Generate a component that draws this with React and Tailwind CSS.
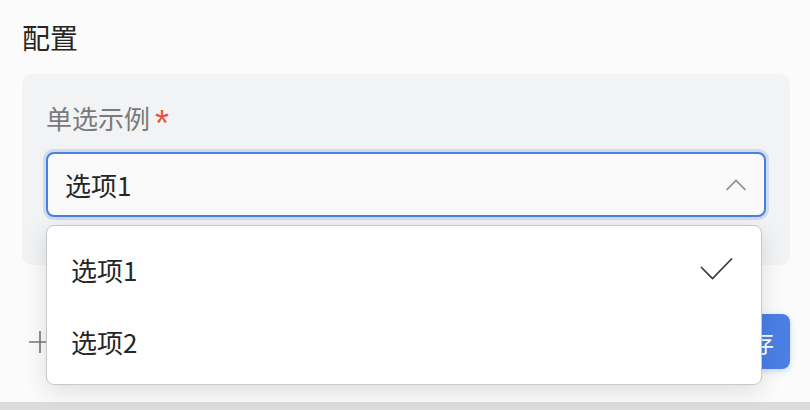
import React from "react";

const font = { fontFamily: '"Noto Sans CJK SC", "Noto Sans", sans-serif' };

export default function App() {
  return (
    <div className="w-[810px] h-[410px] bg-[#fbfbfb] overflow-hidden flex flex-col" style={font}>
      <div className="h-[402px] pl-[22px] pr-[20px] flex flex-col">
        <div className="pt-[19px] h-[36px] box-content text-[28px] leading-[36px] text-[#262626]">配置</div>
        <div className="mt-[19px] h-[191px] rounded-[10px] bg-[#f2f3f5] px-[24px] flex flex-col">
          <div className="mt-[26px] h-[36px] flex items-center text-[26px] leading-[36px] text-[#7a7a7a]">
            <span>单选示例</span>
            <span className="ml-[5px] text-[#e5533f] text-[36px] leading-[36px] h-[36px] pt-[6px] font-['Liberation_Sans',sans-serif]">*</span>
          </div>
          <div className="relative mt-[16px]">
            <div className="h-[65px] rounded-[8px] border-2 border-[#4a7ee0] bg-[#fafafa] ring-[3px] ring-[#4a7ee0]/20 flex items-center justify-between pl-[17px] pr-[17px]">
              <span className="text-[26px] text-[#262626]">选项1</span>
              <svg width="22" height="14" viewBox="0 0 22 14" fill="none">
                <path d="M1.5 12 L11 2.5 L20.5 12" stroke="#8a8a8a" strokeWidth="1.6" />
              </svg>
            </div>
            <div className="absolute left-0 top-[73px] w-[716px] h-[160px] z-10 rounded-[8px] border border-[#c8c8c8] bg-white shadow-[0_6px_24px_rgba(0,0,0,0.12)] flex flex-col justify-center">
              <div className="h-[72px] flex items-center justify-between pl-[24px] pr-[28px]">
                <span className="text-[26px] text-[#262626]">选项1</span>
                <svg width="33" height="24" viewBox="0 0 33 24" fill="none">
                  <path d="M1 10 L12.5 21.5 L32 1.5" stroke="#333" strokeWidth="1.6" />
                </svg>
              </div>
              <div className="h-[72px] flex items-center pl-[24px]">
                <span className="text-[26px] text-[#262626]">选项2</span>
              </div>
            </div>
          </div>
        </div>
        <div className="mt-[49px] flex items-center justify-between">
          <div className="pl-[7px]">
            <svg width="22" height="22" viewBox="0 0 22 22" fill="none">
              <path d="M11 0 V22 M0 11 H22" stroke="#777" strokeWidth="1.6" />
            </svg>
          </div>
          <button className="h-[55px] px-[16px] rounded-[8px] bg-[#4a7fe4] text-white text-[24px] shadow-[0_2px_6px_rgba(74,127,228,0.3)]">保存</button>
        </div>
      </div>
      <div className="h-[8px] bg-[#dcdcdc]" />
    </div>
  );
}
